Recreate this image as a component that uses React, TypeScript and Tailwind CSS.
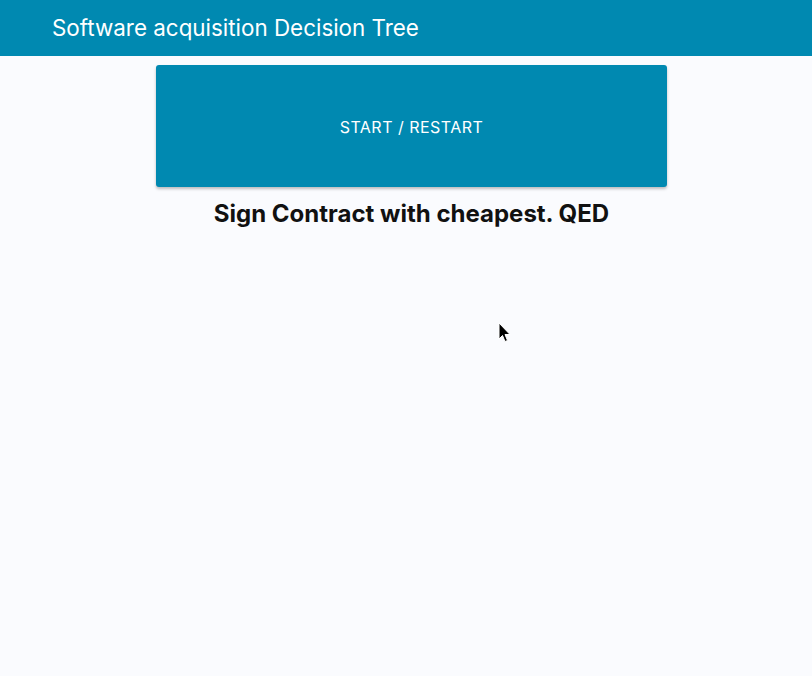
import React from 'react'

const App = () => {
  return (
    <div className="min-h-[676px] bg-[#fafbfe] font-['Inter',sans-serif] relative">
      <header className="h-[56px] bg-[#0089b1] flex items-center pl-[52px]">
        <h1 className="text-[22.4px] text-white font-normal leading-none">Software acquisition Decision Tree</h1>
      </header>
      <div className="ml-[156px] w-[511px] pt-[9px] flex flex-col items-center">
        <button className="w-full h-[122px] bg-[#0089b1] rounded-[3px] shadow-[0_2px_3px_rgba(0,0,0,0.25)] text-white text-[16px] tracking-[0.03em] pt-[2px]">
          START / RESTART
        </button>
        <h2 className="mt-[12px] text-[24px] font-bold text-[#111] leading-tight">Sign Contract with cheapest. QED</h2>
      </div>
      <svg className="absolute left-[498px] top-[322px]" width="14" height="22" viewBox="0 0 14 22">
        <path d="M1 1 L1 17 L4.5 13.5 L7 19.5 L9.5 18.5 L7 12.5 L12 12.5 Z" fill="#000" stroke="#fff" strokeWidth="1" />
      </svg>
    </div>
  )
}

export default App
